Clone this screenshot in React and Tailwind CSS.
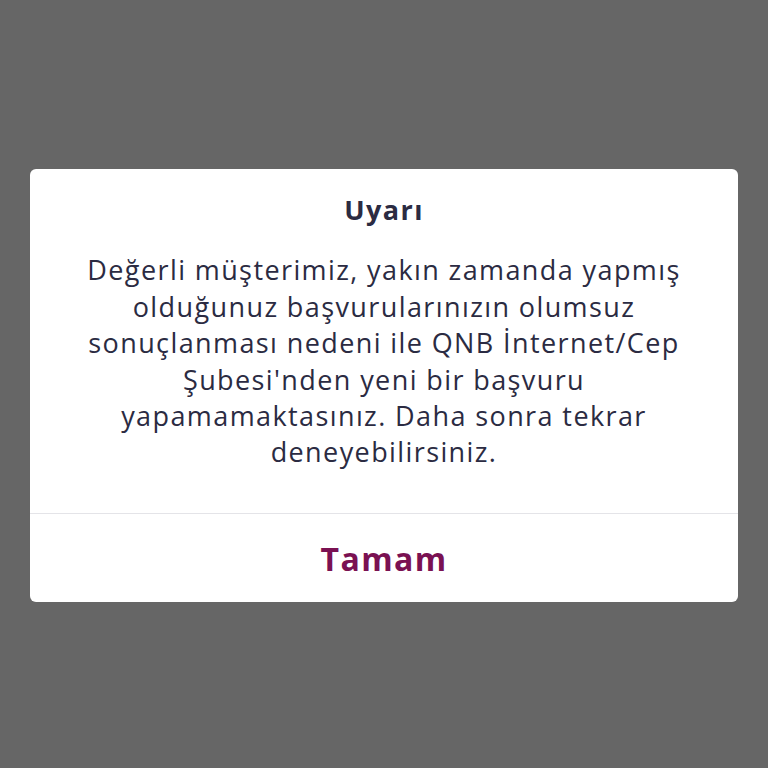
export default function App() {
  const lines = [
    'Değerli müşterimiz, yakın zamanda yapmış',
    'olduğunuz başvurularınızın olumsuz',
    'sonuçlanması nedeni ile QNB İnternet/Cep',
    "Şubesi'nden yeni bir başvuru",
    'yapamamaktasınız. Daha sonra tekrar',
    'deneyebilirsiniz.',
  ]

  return (
    <div
      className="w-[768px] h-[768px] bg-[#666666] flex items-center justify-center"
      style={{ fontFamily: '"Open Sans", Lato, sans-serif' }}
    >
      <div className="w-[708px] bg-white rounded-md flex flex-col mt-[3px]">
        <div className="pt-[23px] pb-[42px] px-4 flex flex-col items-center text-[#2b2b42]">
          <h2 className="text-[27px] leading-[36px] font-bold tracking-[1.4px]">Uyarı</h2>
          <p className="mt-[24px] text-[27px] leading-[36.4px] text-center tracking-[1.4px]">
            {lines.map((l, i) => (
              <span key={i} className="block">{l}</span>
            ))}
          </p>
        </div>
        <div className="border-t border-[#e4e4e8] h-[89px] flex items-center justify-center">
          <button className="text-[32px] font-bold text-[#7a1152] leading-none mt-[2px] tracking-[1.4px]">Tamam</button>
        </div>
      </div>
    </div>
  )
}
